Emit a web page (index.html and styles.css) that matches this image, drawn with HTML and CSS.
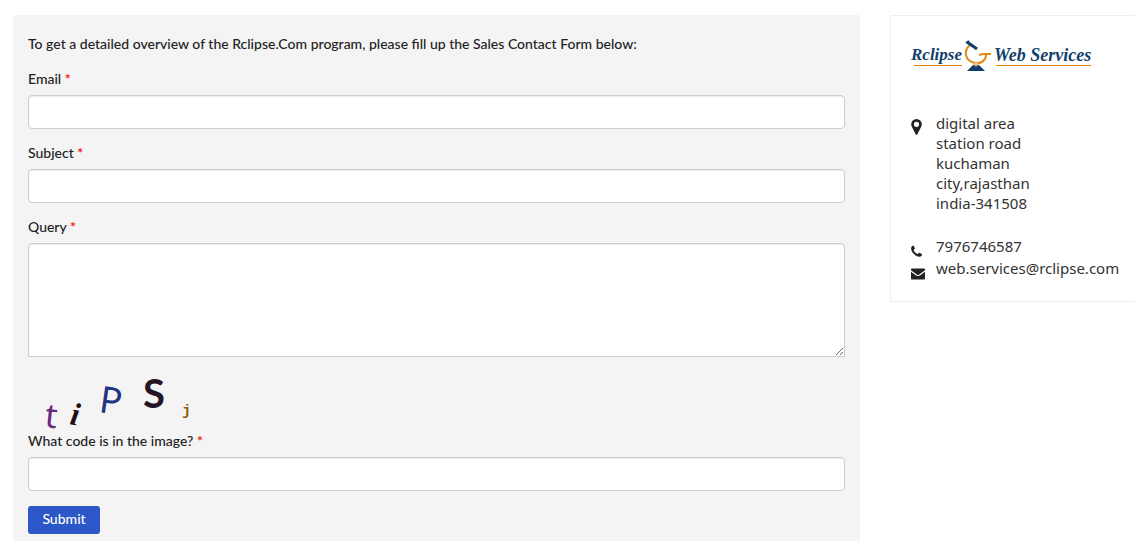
FILE: index.html
```
<!DOCTYPE html>
<html lang="en">
<head>
<meta charset="utf-8">
<title>Sales Contact Form</title>
<link rel="stylesheet" href="styles.css">
</head>

<body>
<div class="container">
  <form class="contact-form" method="post" action="">
    <p class="intro">To get a detailed overview of the Rclipse.Com program, please fill up the Sales Contact Form below:</p>

    <div class="form-group">
      <label for="email">Email <span class="required">*</span></label>
      <input type="text" id="email" name="email" class="form-control">
    </div>
    <div class="form-group">
      <label for="subject">Subject <span class="required">*</span></label>
      <input type="text" id="subject" name="subject" class="form-control">
    </div>
    <div class="form-group">
      <label for="query">Query <span class="required">*</span></label>
      <textarea id="query" name="query" class="form-control"></textarea>
    </div>

    <div class="form-group">
      <svg class="captcha" width="200" height="60" viewBox="0 0 200 60">
        <text class="cap-sans" x="16" y="56" font-size="34" fill="#6b2a7d" transform="rotate(6 16 56)">t</text>
        <text class="cap-script" x="41" y="53" font-size="32" fill="#1e0f0c" transform="rotate(10 41 53)">i</text>
        <text class="cap-sans" x="70" y="41" font-size="37" fill="#1f3584" transform="rotate(8 70 41)">P</text>
        <text class="cap-bold" x="115" y="37" font-size="40" fill="#241425">S</text>
        <text class="cap-mono" x="154" y="44" font-size="15" fill="#8f5f0a">j</text>
      </svg>
      <label for="code">What code is in the image? <span class="required">*</span></label>
      <input type="text" id="code" name="code" class="form-control">
    </div>

    <button type="submit" class="btn">Submit</button>
  </form>

  <div class="sidebar">
    <svg class="logo" width="182" height="34" viewBox="0 0 182 34">
      <text class="logo-text" x="0" y="20" font-size="17">Rclipse</text>
      <text class="logo-text" x="83" y="21" font-size="18">Web Services</text>
      <path d="M3 25.500H51M85 25.500H180" fill="none" stroke="#de8309"/>
      <path d="M59 5C52 11 54 21 64 23C71 24 75 20 75 14M68 15L72 14H80" fill="none" stroke="#e08a13" stroke-width="2"/>
      <path d="M56 2L66 9" stroke="#123f6b" stroke-width="3"/>
      <path d="M55 3L58 1" stroke="#123f6b" stroke-width="2"/>
      <path d="M56 31L62 25H68L74 31Z" fill="#123f6b"/>
      <circle cx="65" cy="24" r="2" fill="#f6d2a0" stroke="#d99a4a"/>
    </svg>

    <div class="contact-row address">
      <svg class="icon" width="16" height="18" viewBox="0 0 16 18">
        <path fill-rule="evenodd" d="M5.500 1A5.300 5.300 0 0 0 0.200 6.300C0.200 8 1 9 1.500 10L4.600 16.200Q5.500 17.700 6.400 16.200L9.500 10C10 9 10.800 8 10.800 6.300A5.300 5.300 0 0 0 5.500 1ZM5.500 3.700A2.600 2.600 0 1 1 5.500 8.900A2.600 2.600 0 1 1 5.500 3.700Z"/>
      </svg>
      <address>digital area<br>station road<br>kuchaman<br>city,rajasthan<br>india-341508</address>
    </div>
    <div class="contact-row">
      <svg class="icon" width="16" height="14" viewBox="0 0 16 14">
        <path d="M0.300 3.200C0.600 2.200 1.800 1.700 2.500 1.800C3 2.200 3.600 3.500 3.900 4.400C4 5 2.600 5.500 2.700 6.200C3.300 7.700 4.800 9.300 6.500 10C7.300 10.200 7.700 8.700 8.400 8.800C9.200 9.200 10.400 9.800 10.900 10.300C11.200 11.100 10.500 12.300 9.500 12.600C7 13.300 4.600 11.700 2.700 9.800C1 8 -0.400 5.500 0.300 3.200Z"/>
      </svg>
      <span>7976746587</span>
    </div>
    <div class="contact-row">
      <svg class="icon" width="16" height="14" viewBox="0 0 16 14">
        <path d="M1 2.500H13Q14 2.500 14 3.500V4.300L8.600 8.300Q7 9.500 5.400 8.300L0 4.300V3.500Q0 2.500 1 2.500Z"/>
        <path d="M0 5.700L4.800 9.300Q7 10.800 9.200 9.300L14 5.700V12.500Q14 13.500 13 13.500H1Q0 13.500 0 12.500Z"/>
      </svg>
      <span>web.services@rclipse.com</span>
    </div>
  </div>
</div>
</body>

</html>
```
FILE: styles.css
```
* {
    box-sizing: border-box;
    }
body {
    margin: 0;
    background: #fff;
    color: #222;
    font-family: Lato, "Liberation Sans", sans-serif;
    font-size: 14px;
    line-height: 20px;
    }
.container {
    display: flex;
    align-items: flex-start;
    gap: 30px;
    padding: 15px 0 0 13px;
    }
.contact-form {
    flex: 1;
    min-width: 0;
    padding: 19px 15px 7px;
    background: #f4f4f4;
    font-weight: 500;
    }
.intro {
    margin: 0 0 15px;
    }
.form-group {
    margin-bottom: 14px;
    }
.form-group label {
    display: block;
    margin-bottom: 6px;
    }
.required {
    color: #f21c0d;
    font-weight: bold;
    }
.form-control {
    display: block;
    width: 100%;
    height: 34px;
    padding: 6px 12px;
    border: 1px solid #ccc;
    border-radius: 4px;
    background: #fff;
    box-shadow: inset 0 1px 1px rgba(0, 0, 0, 0.075);
    font: inherit;
    }
textarea.form-control {
    height: 114px;
    border-radius: 4px 4px 0 0;
    }
.captcha {
    display: block;
    overflow: visible;
    }
.cap-sans {
    font-family: "Noto Sans", sans-serif;
    font-weight: 400;
    }
.cap-script {
    font-family: "Liberation Serif", serif;
    font-style: italic;
    font-weight: bold;
    }
.cap-bold {
    font-family: Lato, sans-serif;
    font-weight: bold;
    }
.cap-mono {
    font-family: "Liberation Mono", monospace;
    font-weight: bold;
    }
.btn {
    display: block;
    width: 72px;
    height: 28px;
    margin-top: 15px;
    padding: 0 0 2px;
    border: 0;
    border-radius: 3px;
    background: #2b57c8;
    color: #fff;
    font: inherit;
    }
.sidebar {
    width: 245px;
    padding: 20px 0 22px 20px;
    border: 1px solid #eee;
    border-right: 0;
    font-family: "Noto Sans", sans-serif;
    font-size: 15px;
    color: #333;
    }
.logo {
    display: block;
    margin: 4px 0 39px;
    overflow: visible;
    }
.logo-text {
    font-family: "Liberation Serif", serif;
    font-style: italic;
    font-weight: bold;
    fill: #123f6b;
    }
.contact-row {
    display: flex;
    gap: 9px;
    line-height: 22px;
    }
.contact-row.address {
    margin-bottom: 22px;
    line-height: 20px;
    }
.contact-row address {
    font-style: normal;
    }
.icon {
    flex: none;
    margin: 9px 0 -1px;
    fill: #222;
    }
.address .icon {
    margin-top: 5px;
    }
```
